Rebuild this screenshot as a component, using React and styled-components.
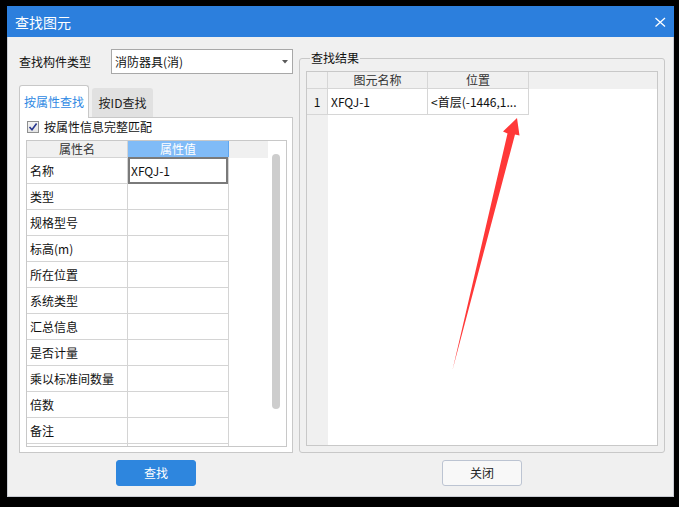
import React from 'react';
import styled, { createGlobalStyle } from 'styled-components';

const Global = createGlobalStyle`
  html, body { margin: 0; padding: 0; background: #000; }
  body {
    font-family: "Noto Sans CJK SC", "Microsoft YaHei", sans-serif;
    font-size: 12px;
    color: #111;
  }
  * { box-sizing: border-box; }
`;

const Page = styled.div`
  position: relative;
  width: 679px;
  height: 507px;
  padding: 6px 0 0 7px;
  background: #000;
`;

const Window = styled.div`
  width: 667px;
  height: 491px;
  display: flex;
  flex-direction: column;
`;

const TitleBar = styled.div`
  flex: none;
  height: 31px;
  background: #2c7fdd;
  display: flex;
  align-items: center;
  justify-content: space-between;
  padding: 0 8px 0 8px;
  color: #fff;
  font-size: 14px;
  line-height: 16px;
`;

const Body = styled.div`
  flex: 1;
  background: #f0f0f0;
  border: 1px solid #c9ccd3;
  border-top: none;
  display: grid;
  grid-template-columns: 274px 366px;
  grid-template-rows: 404px 26px;
  column-gap: 6px;
  row-gap: 7px;
  padding: 12px 0 0 11px;
`;

const LeftCol = styled.div`
  display: flex;
  flex-direction: column;
`;

const TypeRow = styled.div`
  display: flex;
  align-items: center;
  height: 25px;
`;

const Label = styled.span`
  width: 92px;
  flex: none;
  line-height: 14px;
`;

const Select = styled.div`
  flex: 1;
  height: 25px;
  border: 1px solid #a8a8a8;
  background: #fff;
  display: flex;
  align-items: center;
  justify-content: space-between;
  padding: 0 4px 0 3px;
  line-height: 14px;
`;

const TabBar = styled.div`
  margin-top: 11px;
  height: 32px;
  display: flex;
  align-items: flex-end;
  gap: 3px;
`;

const Tab = styled.div`
  position: relative;
  z-index: 1;
  display: flex;
  align-items: center;
  justify-content: center;
  width: ${p => (p.$active ? 70 : 61)}px;
  height: ${p => (p.$active ? 33 : 29)}px;
  margin-bottom: ${p => (p.$active ? -1 : 0)}px;
  background: ${p => (p.$active ? '#fff' : '#e1e1e1')};
  color: ${p => (p.$active ? '#2f89e3' : '#222')};
  border: ${p => (p.$active ? '1px solid #c8c8c8' : 'none')};
  border-bottom: none;
  border-radius: 3px 3px 0 0;
  line-height: 14px;
  padding-bottom: ${p => (p.$active ? 1 : 0)}px;
`;

const Panel = styled.div`
  height: 336px;
  border: 1px solid #c8c8c8;
  background: #fff;
  padding: 2px 5px 5px 6px;
  display: flex;
  flex-direction: column;
`;

const CheckRow = styled.div`
  height: 14px;
  display: flex;
  align-items: center;
  gap: 5px;
  margin-left: 1px;
  line-height: 14px;
`;

const CheckBox = styled.span`
  width: 12px;
  height: 12px;
  flex: none;
  border: 1px solid #8e8f8f;
  background: linear-gradient(#f4f4f4, #e4e4e4);
  display: flex;
  align-items: center;
  justify-content: center;
`;

const PropGrid = styled.div`
  margin-top: 6px;
  width: 261px;
  height: 307px;
  border: 1px solid #c8c8c8;
  background: #fff;
  display: flex;
  overflow: hidden;
`;

const PropTable = styled.div`
  width: 202px;
  flex: none;
  display: flex;
  flex-direction: column;
`;

const PropRow = styled.div`
  display: flex;
  flex: none;
  height: ${p => (p.$head ? 17 : 26)}px;
  border-bottom: 1px solid #d4d4d4;
`;

const PropCell = styled.div`
  width: 101px;
  flex: none;
  display: flex;
  align-items: center;
  justify-content: ${p => (p.$head ? 'center' : 'flex-start')};
  padding-left: ${p => (p.$head ? 0 : 3)}px;
  border-right: 1px solid ${p => (p.$blue ? '#5fa6ef' : '#d4d4d4')};
  background: ${p => (p.$blue ? '#80bbf7' : p.$head ? '#f0f0f0' : '#fff')};
  color: ${p => (p.$blue ? '#fff' : p.$head ? '#333' : '#111')};
  box-shadow: ${p => (p.$selected ? 'inset 0 0 0 2px #7a7a7a' : 'none')};
  margin-top: ${p => (p.$selected ? -1 : 0)}px;
  height: ${p => (p.$selected ? 'calc(100% + 2px)' : '100%')};
  position: relative;
  line-height: 14px;
  white-space: nowrap;
`;

const Filler = styled.div`
  width: 39px;
  flex: none;
  display: flex;
  flex-direction: column;
`;

const FillerHead = styled.div`
  height: 17px;
  background: #f0f0f0;
`;

const ScrollTrack = styled.div`
  width: 18px;
  flex: none;
  padding: 13px 0 0 4px;
`;

const ScrollThumb = styled.div`
  width: 8px;
  height: 255px;
  border-radius: 4px;
  background: #cdcdcd;
`;

const ButtonCell = styled.div`
  display: flex;
  justify-content: center;
`;

const Button = styled.button`
  width: 80px;
  height: 26px;
  border-radius: 3px;
  font-family: inherit;
  font-size: 12px;
  line-height: 14px;
  padding: 0;
  border: 1px solid ${p => (p.$primary ? '#2e86de' : '#bcc4d2')};
  background: ${p => (p.$primary ? '#2e86de' : '#f8f8f8')};
  color: ${p => (p.$primary ? '#fff' : '#222')};
`;

const GroupBox = styled.div`
  position: relative;
  margin-top: 9px;
  height: 395px;
  border: 1px solid #c8c8c8;
  border-radius: 3px;
  padding: 12px 6px 6px 6px;
`;

const Legend = styled.span`
  position: absolute;
  top: -8px;
  left: 10px;
  padding: 0 1px;
  background: #f0f0f0;
  line-height: 14px;
`;

const ResultGrid = styled.div`
  width: 352px;
  height: 100%;
  border: 1px solid #c8c8c8;
  background: #fff;
  display: flex;
  flex-direction: column;
`;

const ResRow = styled.div`
  display: flex;
  flex: none;
  height: ${p => (p.$head ? 17 : 26)}px;
  background: ${p => (p.$head ? '#f0f0f0' : 'transparent')};
`;

const ResCell = styled.div`
  width: ${p => p.$w}px;
  flex: none;
  display: flex;
  align-items: center;
  justify-content: ${p => (p.$center ? 'center' : 'flex-start')};
  padding-left: ${p => (p.$center ? 0 : 3)}px;
  border-right: 1px solid #d6d6d6;
  border-bottom: 1px solid #d6d6d6;
  background: ${p => (p.$gray ? '#f0f0f0' : p.$head ? '#f0f0f0' : '#fff')};
  color: ${p => (p.$head ? '#333' : '#111')};
  line-height: 14px;
  white-space: nowrap;
`;

const ResRest = styled.div`
  flex: 1;
  display: flex;
`;

const RowHeadStrip = styled.div`
  width: 21px;
  background: #f0f0f0;
`;

const Overlay = styled.svg`
  position: absolute;
  left: 0;
  top: 0;
  pointer-events: none;
`;

const rows = ['名称', '类型', '规格型号', '标高(m)', '所在位置', '系统类型', '汇总信息', '是否计量', '乘以标准间数量', '倍数', '备注', ''];

export default function App() {
  return (
    <>
      <Global />
      <Page>
        <Window>
          <TitleBar>
            <span>查找图元</span>
            <svg width="12" height="12" viewBox="0 0 12 12">
              <path d="M1.5 2 L11 10.5 M11 2 L1.5 10.5" stroke="#fff" strokeWidth="1.3" fill="none" />
            </svg>
          </TitleBar>
          <Body>
            <LeftCol>
              <TypeRow>
                <Label>查找构件类型</Label>
                <Select>
                  <span>消防器具(消)</span>
                  <svg width="6" height="4" viewBox="0 0 6 4">
                    <path d="M0 0 H6 L3 3.5 Z" fill="#5a5a5a" />
                  </svg>
                </Select>
              </TypeRow>
              <TabBar>
                <Tab $active>按属性查找</Tab>
                <Tab>按ID查找</Tab>
              </TabBar>
              <Panel>
                <CheckRow>
                  <CheckBox>
                    <svg width="10" height="10" viewBox="0 0 10 10">
                      <path d="M1.5 5 L4 7.8 L8.6 1.6" stroke="#27378f" strokeWidth="1.6" fill="none" />
                    </svg>
                  </CheckBox>
                  <span>按属性信息完整匹配</span>
                </CheckRow>
                <PropGrid>
                  <PropTable>
                    <PropRow $head>
                      <PropCell $head>属性名</PropCell>
                      <PropCell $head $blue>属性值</PropCell>
                    </PropRow>
                    {rows.map((r, i) => (
                      <PropRow key={i}>
                        <PropCell>{r}</PropCell>
                        <PropCell $selected={i === 0}>{i === 0 ? 'XFQJ-1' : ''}</PropCell>
                      </PropRow>
                    ))}
                  </PropTable>
                  <Filler>
                    <FillerHead />
                  </Filler>
                  <ScrollTrack>
                    <ScrollThumb />
                  </ScrollTrack>
                </PropGrid>
              </Panel>
            </LeftCol>
            <GroupBox>
              <Legend>查找结果</Legend>
              <ResultGrid>
                <ResRow $head>
                  <ResCell $w={21} $head $center />
                  <ResCell $w={100} $head $center>图元名称</ResCell>
                  <ResCell $w={101} $head $center>位置</ResCell>
                </ResRow>
                <ResRow>
                  <ResCell $w={21} $gray $center>1</ResCell>
                  <ResCell $w={100}>XFQJ-1</ResCell>
                  <ResCell $w={101}>&lt;首层(-1446,1...</ResCell>
                </ResRow>
                <ResRest>
                  <RowHeadStrip />
                </ResRest>
              </ResultGrid>
            </GroupBox>
            <ButtonCell>
              <Button $primary>查找</Button>
            </ButtonCell>
            <ButtonCell>
              <Button>关闭</Button>
            </ButtonCell>
          </Body>
        </Window>
        <Overlay width="679" height="507" viewBox="0 0 679 507">
          <path d="M452.5 370 L507.5 133.5 L503 131.5 L517 118 L519.5 135.5 L515 134.5 Z" fill="#ff3838" />
        </Overlay>
      </Page>
    </>
  );
}
